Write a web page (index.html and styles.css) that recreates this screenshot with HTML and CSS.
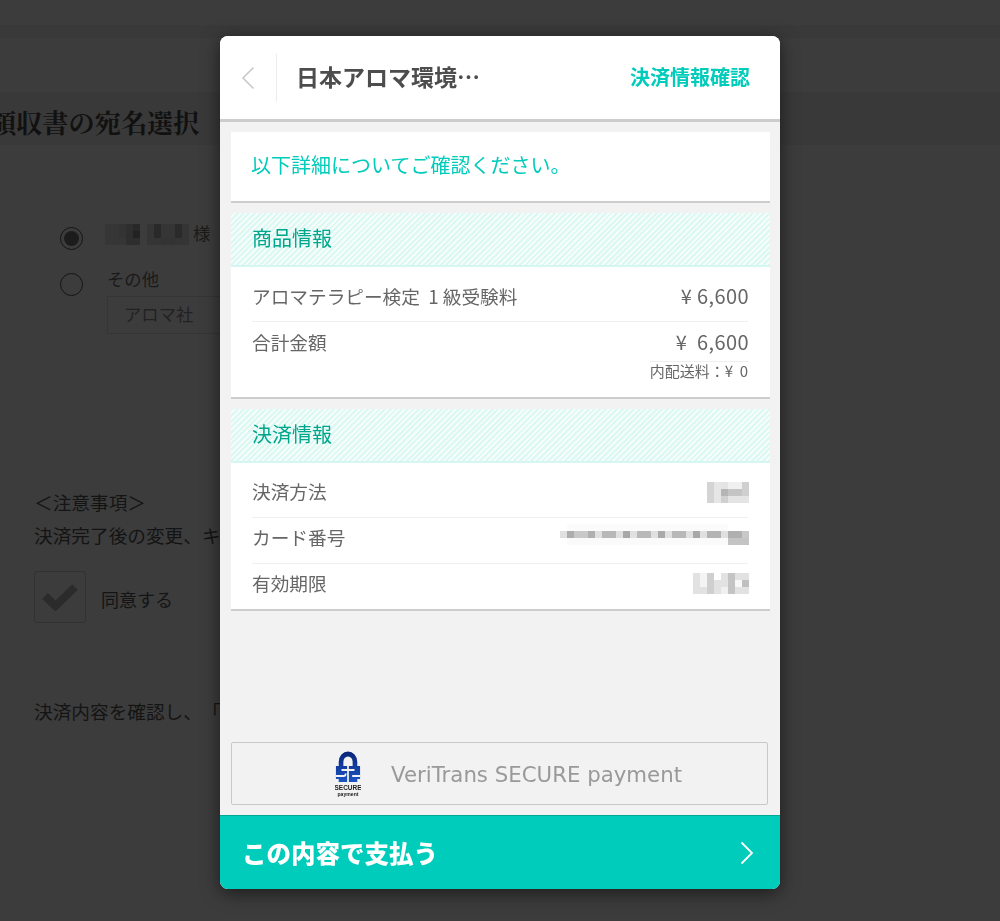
FILE: index.html
```html
<!DOCTYPE html>
<html lang="ja">
<head>
<meta charset="utf-8">
<title>決済情報確認</title>
<link rel="stylesheet" href="styles.css">
</head>
<body>
<main class="page">
  <div class="top-band"></div>
  <h1 class="page-title">領収書の宛名選択</h1>
  <section class="address">
    <div class="choice choice-first">
      <span class="radio radio-on"></span>
      <svg class="mosaic-name" width="84" height="21" viewBox="0 0 84 21"><rect width="35" height="21" fill="#363636"/><rect x="14" width="7" height="14" fill="#333"/><rect x="21" width="14" height="21" fill="#2e2e2e"/><rect x="28" y="7" width="7" height="7" fill="#222"/><rect x="28" y="0" width="7" height="7" fill="#282828"/><rect x="42" width="42" height="21" fill="#353535"/><rect x="49" y="0" width="7" height="14" fill="#292929"/><rect x="70" y="0" width="7" height="14" fill="#2a2a2a"/><rect x="56" y="14" width="14" height="7" fill="#333"/></svg>
      <span class="choice-text">様</span>
    </div>
    <div class="choice">
      <span class="radio"></span>
      <div class="other">
        <span class="choice-text">その他</span>
        <div class="other-input">アロマ社</div>
      </div>
    </div>
  </section>
  <section class="notes">
    <p class="note">＜注意事項＞</p>
    <p class="note">決済完了後の変更、キャンセルはできません。</p>
    <div class="agree">
      <span class="checkbox"><svg width="36" height="28" viewBox="0 0 36 28"><path d="M3 13 L13.5 23 L33 4" fill="none" stroke="#2b2b2b" stroke-width="8"/></svg></span>
      <span class="note">同意する</span>
    </div>
    <p class="note confirm">決済内容を確認し、「この内容で支払う」を押してください。</p>
  </section>
</main>

<div class="modal">
  <header class="modal-head">
    <button class="back" type="button" aria-label="戻る"><svg width="14" height="24" viewBox="0 0 14 24"><path d="M12.5 1.5 L2 12 L12.5 22.5" fill="none" stroke="#c9c9c9" stroke-width="1.6"/></svg></button>
    <div class="shop">日本アロマ環境…</div>
    <div class="step">決済情報確認</div>
  </header>

  <div class="modal-body">
    <div class="card lead">以下詳細についてご確認ください。</div>

    <section class="card">
      <h2 class="card-head">商品情報</h2>
      <div class="rows rows-goods">
        <div class="row"><span>アロマテラピー検定&nbsp; 1 級受験料</span><span class="amount">¥ 6,600</span></div>
        <div class="row row-total"><span>合計金額</span><span class="amount">¥&nbsp; 6,600</span></div>
        <div class="shipping"><span>内配送料：¥&nbsp; 0</span></div>
      </div>
    </section>

    <section class="card">
      <h2 class="card-head">決済情報</h2>
      <div class="rows">
        <div class="row"><span>決済方法</span>
          <svg class="mosaic mosaic-method" width="42" height="21" viewBox="0 0 42 21"><rect width="7" height="21" fill="#d4d4d4"/><rect x="7" width="7" height="21" fill="#e6e6e6"/><rect x="14" width="28" height="21" fill="#e4e4e4"/><rect x="14" y="7" width="7" height="7" fill="#b5b5b5"/><rect x="21" y="7" width="14" height="7" fill="#c4c4c4"/><rect x="21" y="0" width="14" height="7" fill="#f0f0f0"/><rect x="35" width="7" height="14" fill="#cfcfcf"/><rect x="14" y="14" width="7" height="7" fill="#d0d0d0"/></svg>
        </div>
        <div class="row"><span>カード番号</span>
          <svg class="mosaic mosaic-card" width="189" height="21" viewBox="0 0 189 21"><rect y="7" width="189" height="7" fill="#e0e0e0"/><rect x="7" y="7" width="7" height="7" fill="#adadad"/><rect x="14" y="7" width="14" height="7" fill="#c8c8c8"/><rect x="28" y="7" width="7" height="7" fill="#b0b0b0"/><rect x="42" y="7" width="14" height="7" fill="#b8b8b8"/><rect x="63" y="7" width="7" height="7" fill="#a8a8a8"/><rect x="77" y="7" width="14" height="7" fill="#b8b8b8"/><rect x="98" y="7" width="7" height="7" fill="#aaa"/><rect x="112" y="7" width="14" height="7" fill="#b8b8b8"/><rect x="133" y="7" width="7" height="7" fill="#a8a8a8"/><rect x="147" y="7" width="14" height="7" fill="#b4b4b4"/><rect x="168" y="7" width="14" height="7" fill="#b0b0b0"/><rect x="168" y="14" width="21" height="7" fill="#c4c4c4"/><rect x="182" y="7" width="7" height="7" fill="#c8c8c8"/><rect x="7" y="0" width="161" height="7" fill="#fbfbfb"/><rect x="7" y="14" width="161" height="7" fill="#fafafa"/></svg>
        </div>
        <div class="row"><span>有効期限</span>
          <svg class="mosaic mosaic-date" width="56" height="21" viewBox="0 0 56 21"><rect width="56" height="21" fill="#e2e2e2"/><rect x="7" width="7" height="14" fill="#f4f4f4"/><rect x="14" width="7" height="21" fill="#cfcfcf"/><rect x="21" width="7" height="7" fill="#fff"/><rect x="35" width="7" height="21" fill="#c4c4c4"/><rect x="42" y="7" width="7" height="7" fill="#f8f8f8"/><rect x="49" y="7" width="7" height="7" fill="#c0c0c0"/><rect x="28" y="14" width="7" height="7" fill="#f0f0f0"/></svg>
        </div>
      </div>
    </section>

    <div class="secure">
      <svg class="secure-logo" width="26" height="46" viewBox="0 0 28 46" preserveAspectRatio="none">
        <defs><linearGradient id="lockBlue" x1="0" y1="0" x2="0" y2="1"><stop offset="0" stop-color="#0a2478"/><stop offset="1" stop-color="#1a55c4"/></linearGradient></defs>
        <path d="M4 15 V11 A10 10.5 0 0 1 24 11 V15 H27 V28 H24 V31 H4 V28 H1 V15 Z" fill="url(#lockBlue)"/>
        <path d="M9 15 V11 A5 5.5 0 0 1 19 11 V15 Z" fill="#f2f2f2"/>
        <path d="M14 9 V31 M7 19 H21 M1 25 H9.5 Q11.5 25 11.5 22.5 M27 25 H18.5" fill="none" stroke="#f2f2f2" stroke-width="1.9"/>
        <text class="logo-big" x="14" y="39">SECURE</text>
        <text class="logo-small" x="14" y="45">payment</text>
      </svg>
      <span class="secure-text">VeriTrans SECURE payment</span>
    </div>
  </div>

  <button class="pay" type="button">
    <span>この内容で支払う</span>
    <svg width="14" height="24" viewBox="0 0 14 24"><path d="M1.5 1.5 L12 12 L1.5 22.5" fill="none" stroke="#fff" stroke-width="1.8"/></svg>
  </button>
</div>
</body>
</html>
```

FILE: styles.css
```css
* { box-sizing: border-box; }
html, body { margin: 0; height: 100%; }
body {
  height: 921px;
  overflow: hidden;
  background: #3c3c3c;
  font-family: "Noto Sans CJK JP", "Noto Sans", sans-serif;
  color: #141414;
  text-spacing-trim: space-all;
}
p, h1, h2 { margin: 0; font-weight: 400; }

.page { height: 921px; overflow: hidden; padding-top: 25px; }
.top-band { height: 13px; background: #393939; }
.page-title {
  height: 53px;
  margin: 54px 0 0;
  background: #393939;
  font-family: "Noto Serif CJK JP", "Liberation Serif", "Noto Sans CJK JP", serif;
  font-size: 26.2px;
  font-weight: 700;
  line-height: 59px;
  white-space: nowrap;
  text-indent: -10px;
  color: #111;
}

.address { padding: 79px 0 0 60px; }
.choice { display: flex; align-items: flex-start; gap: 24px; height: 46px; width: 170px; }
.choice-first { gap: 22px; }
.radio {
  position: relative;
  flex: none;
  width: 23px;
  height: 23px;
  margin: 3px 0 0;
  border: 1px solid #141414;
  border-radius: 50%;
}
.radio-on::after {
  content: "";
  position: absolute;
  inset: 3px;
  border-radius: 50%;
  background: #1c1c1c;
}
.mosaic-name { flex: none; margin-right: -18px; }
.choice-text { display: block; margin-top: -4px; font-size: 17.33px; line-height: 26px; white-space: nowrap; color: #1a1a1a; }
.other { display: flex; flex-direction: column; }
.other-input {
  width: 140px;
  height: 38px;
  margin-top: 4px;
  padding-left: 16px;
  border: 1px solid #353535;
  font-size: 17.33px;
  line-height: 34px;
  color: #222;
}

.notes { padding: 169px 0 0 34px; width: 600px; }
.note { font-size: 18.67px; line-height: 33px; white-space: nowrap; color: #141414; }
.agree { display: flex; align-items: center; gap: 15px; margin-top: 20px; }
.agree .note { margin-top: 4px; font-size: 18px; }
.checkbox {
  display: flex;
  align-items: center;
  justify-content: center;
  width: 52px;
  height: 52px;
  border: 1px solid #323232;
  border-radius: 3px;
}
.confirm { margin-top: 71px; }

.modal {
  position: fixed;
  left: 220px;
  top: 36px;
  width: 560px;
  height: 853px;
  display: flex;
  flex-direction: column;
  overflow: hidden;
  border-radius: 8px;
  background: #f2f2f2;
  box-shadow: 0 4px 18px rgba(0, 0, 0, .55);
}
.modal-head {
  flex: none;
  display: flex;
  align-items: center;
  height: 86px;
  padding-right: 30px;
  background: #fff;
  border-bottom: 3px solid #cdcdcd;
}
.back {
  display: flex;
  align-items: center;
  flex: none;
  width: 57px;
  height: 48px;
  padding: 0 0 0 21px;
  background: none;
  border: 0;
  border-right: 1px solid #ececec;
}
.shop {
  flex: 1;
  margin-top: -3px;
  padding-left: 19px;
  font-size: 23px;
  font-weight: 700;
  line-height: 30px;
  color: #4d4d4d;
}
.step {
  margin-top: -2px;
  font-size: 20px;
  font-weight: 700;
  line-height: 28px;
  color: #00ccbb;
}

.modal-body {
  flex: 1;
  display: flex;
  flex-direction: column;
  gap: 10px;
  padding: 10px 10px 10px 11px;
}
.card { background: #fff; border-bottom: 2px solid #cdcdcd; }
.lead {
  height: 71px;
  padding-left: 20px;
  font-size: 20px;
  line-height: 65px;
  color: #00ccbb;
}
.card-head {
  height: 54px;
  padding-left: 21px;
  font-size: 20px;
  line-height: 50px;
  color: #00a68c;
  border-bottom: 2px solid #d6f7f1;
  background: repeating-linear-gradient(135deg, #dcf8f2 0 2px, #f5fdfb 2px 4px);
}
.rows { padding: 9px 22px 0 21px; }
.rows-goods { padding-bottom: 14px; }
.row {
  display: flex;
  justify-content: space-between;
  align-items: center;
  height: 46px;
  padding-bottom: 8px;
  font-size: 18.67px;
  line-height: 26px;
  color: #666;
  border-bottom: 1px solid #efefef;
}
.row:last-child { height: 45px; border-bottom: 0; }
.rows-goods .row { padding-bottom: 6px; }
.rows-goods .row-total { align-items: flex-start; height: 39px; padding: 7px 0 0; border-bottom: 0; }
.amount { font-size: 20px; letter-spacing: .4px; margin-right: -1px; }
.shipping { display: flex; justify-content: flex-end; }
.shipping span {
  height: 22px;
  border-top: 1px solid #efefef;
  font-size: 15px;
  line-height: 17px;
  color: #666;
}
.mosaic { flex: none; margin-right: -1px; }
.mosaic-method { margin-top: 3px; }
.mosaic-card { margin-top: -5px; }
.mosaic-date { margin-top: 1px; }

.secure {
  display: flex;
  align-items: center;
  gap: 30px;
  width: 537px;
  height: 63px;
  margin-top: auto;
  padding-left: 103px;
  border: 1px solid #c8c8c8;
  border-radius: 2px;
}
.logo-big, .logo-small {
  font-family: "Liberation Sans", sans-serif;
  font-weight: 700;
  text-anchor: middle;
  fill: #222;
}
.logo-big { font-size: 7px; }
.logo-small { font-size: 5.5px; }
.secure-text {
  margin-top: 2px;
  font-family: "DejaVu Sans", sans-serif;
  font-size: 21.3px;
  color: #999;
  white-space: nowrap;
}

.pay {
  flex: none;
  display: flex;
  align-items: center;
  justify-content: space-between;
  height: 74px;
  padding: 0 26px 0 22px;
  background: #00ccbb;
  border: 0;
  border-top: 1px solid #00a896;
  font-family: inherit;
  font-size: 24.5px;
  font-weight: 900;
  color: #fff;
}
```
